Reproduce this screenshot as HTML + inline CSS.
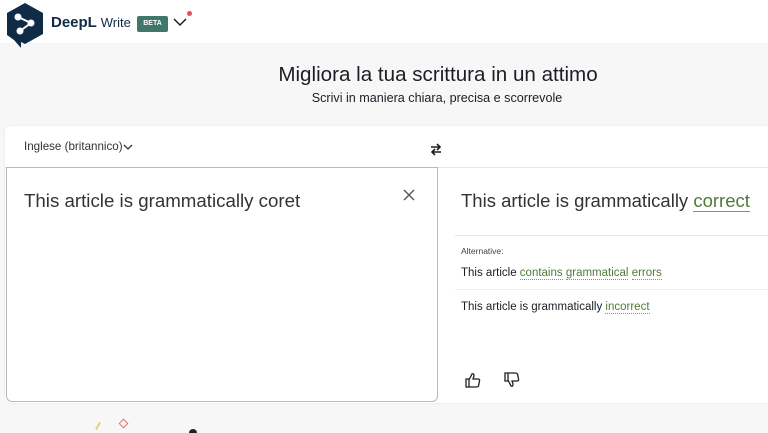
<!DOCTYPE html>
<html><head><meta charset="utf-8"><style>
*{margin:0;padding:0;box-sizing:border-box}
body{width:768px;height:432px;overflow:hidden;background:#f7f7f7;font-family:"Liberation Sans",sans-serif;color:#1b1e25;position:relative}
.hdr{position:absolute;left:0;top:0;width:768px;height:43px;background:#fff}
.abs{position:absolute;white-space:nowrap}
.card{position:absolute;left:5px;top:126px;width:770px;height:277px;background:#fff;border-radius:6px 0 0 6px;box-shadow:0 0 2px rgba(0,0,0,.08)}
.lbox{position:absolute;left:6px;top:167px;width:432px;height:235px;border:1px solid #b3bac4;border-radius:0 0 6px 6px;background:#fff}
.u{border-bottom:1px dotted #7a9e5b;color:#4f7a38}
</style></head><body>
<div class="hdr"></div>
<svg class="abs" style="left:5px;top:2px" width="40" height="46" viewBox="0 0 40 46">
<path d="M20 1 L38 11 L38 32 L20 42 L16 40 L16 46 L9 38 L2 33 L2 11 Z" fill="#0f2b46"/>
<g stroke="#fff" stroke-width="2" fill="#fff"><line x1="13" y1="15" x2="26" y2="21"/><line x1="26" y1="21" x2="15" y2="29"/><circle cx="13" cy="15" r="2.5"/><circle cx="26" cy="21" r="2.5"/><circle cx="15" cy="29" r="2.5"/></g>
</svg>
<div class="abs" style="left:51px;top:14px;font-size:15px;font-weight:bold;color:#0f2b46">DeepL <span style="font-weight:normal;font-size:13px">Write</span></div>
<div class="abs" style="left:137px;top:16px;width:31px;height:16px;background:#41766a;border-radius:2px;color:#fff;font-size:7px;font-weight:bold;text-align:center;line-height:16px">BETA</div>
<svg class="abs" style="left:172px;top:16px" width="16" height="12"><path d="M2 3 L8 9 L14 3" stroke="#1b1e25" stroke-width="1.5" fill="none"/></svg>
<div class="abs" style="left:187px;top:11px;width:5px;height:5px;border-radius:50%;background:#e0505a"></div>
<div class="abs" style="left:54px;width:768px;top:63px;text-align:center;font-size:20.6px">Migliora la tua scrittura in un attimo</div>
<div class="abs" style="left:53px;width:768px;top:91px;text-align:center;font-size:12.6px">Scrivi in maniera chiara, precisa e scorrevole</div>
<div class="card"></div>
<div class="abs" style="left:5px;top:167px;width:763px;height:1px;background:#e8e8e8"></div>
<div class="abs" style="left:24px;top:140px;font-size:11.6px;color:#333">Inglese (britannico)</div>
<svg class="abs" style="left:123px;top:143px" width="10" height="8"><path d="M1 2 L5 6 L9 2" stroke="#333" stroke-width="1.3" fill="none"/></svg>
<svg class="abs" style="left:430px;top:143px" width="12" height="13"><g stroke="#1b1e25" stroke-width="1.6" fill="none"><path d="M1 4 H10 M7 1 L10 4 L7 7"/><path d="M11 9 H2 M5 6 L2 9 L5 12"/></g></svg>
<div class="lbox"></div>
<div class="abs" style="left:24px;top:190px;font-size:18.7px;color:#333">This article is grammatically coret</div>
<svg class="abs" style="left:403px;top:189px" width="12" height="12"><path d="M1 1 L11 11 M11 1 L1 11" stroke="#555" stroke-width="1.4"/></svg>
<div class="abs" style="left:461px;top:190px;font-size:18.5px;color:#333">This article is grammatically <span class="u" style="border-bottom:1px solid #7a9e5b">correct</span></div>
<div class="abs" style="left:455px;top:235px;width:313px;height:1px;background:#e8e8e8"></div>
<div class="abs" style="left:461px;top:246px;font-size:8.5px;color:#444">Alternative:</div>
<div class="abs" style="left:461px;top:267px;font-size:11.5px">This article <span class="u">contains</span> <span class="u">grammatical</span> <span class="u">errors</span></div>
<div class="abs" style="left:455px;top:289px;width:313px;height:1px;background:#ececec"></div>
<div class="abs" style="left:461px;top:301px;font-size:11.5px">This article is grammatically <span class="u">incorrect</span></div>
<svg class="abs" style="left:464px;top:371px" width="18" height="18" viewBox="0 0 18 18"><path d="M2 8 H5 V16 H2 Z M5 9 L8 3 Q10 2 10 5 L9 8 H14 Q16 8 15.5 10 L14.5 15 Q14 16 12 16 H5" stroke="#1b1e25" stroke-width="1.3" fill="none"/></svg>
<svg class="abs" style="left:503px;top:371px" width="18" height="18" viewBox="0 0 18 18"><path d="M2 2 H5 V10 H2 Z M5 9 L8 15 Q10 16 10 13 L9 10 H14 Q16 10 15.5 8 L14.5 3 Q14 2 12 2 H5" stroke="#1b1e25" stroke-width="1.3" fill="none"/></svg>
<div class="abs" style="left:97px;top:422px;width:2px;height:8px;background:#e8d070;transform:rotate(30deg)"></div>
<div class="abs" style="left:120px;top:420px;width:7px;height:7px;border:1.5px solid #d08070;transform:rotate(45deg)"></div>
<div class="abs" style="left:189px;top:429px;width:8px;height:4px;background:#222;border-radius:4px 4px 0 0"></div>
</body></html>
